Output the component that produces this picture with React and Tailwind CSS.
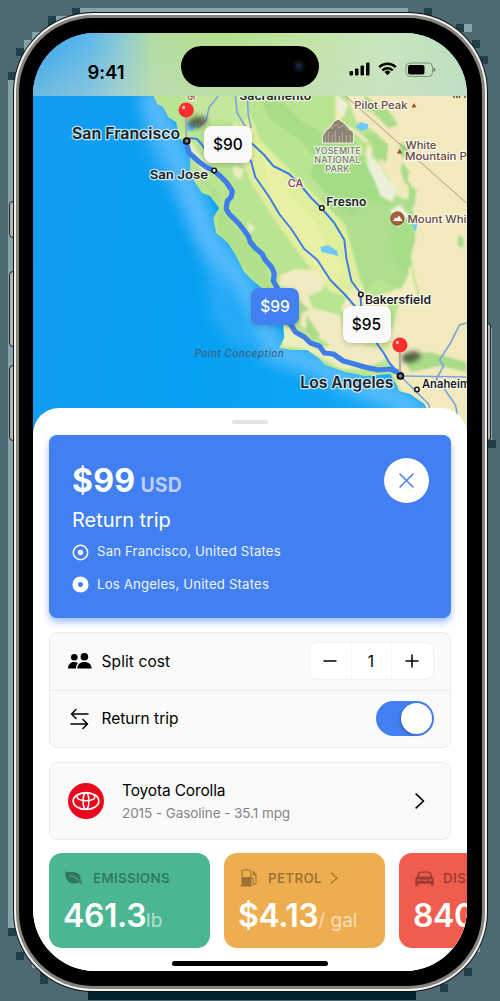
import React from "react";

const halo = { paintOrder: "stroke", stroke: "#ffffff", strokeWidth: 2.5, strokeLinejoin: "round" };

function Label({ x, y, w, size, weight = 600, fill = "#1d1f22", children, ...rest }) {
  return (
    <text x={x} y={y} textLength={w} lengthAdjust="spacingAndGlyphs" fontSize={size} fontWeight={weight} fill={fill} strokeOpacity="0.7" {...halo} {...rest}>
      {children}
    </text>
  );
}

function Town({ x, y, r = 2.2 }) {
  return <circle cx={x} cy={y} r={r} fill="#fff" stroke="#111" strokeWidth="1.5" />;
}

function Pin({ x, y }) {
  return (
    <g>
      <ellipse cx={x + 11} cy={y + 12} rx="10" ry="5.5" fill="#222" opacity="0.65" filter="url(#soft3)" transform={`rotate(-15 ${x + 11} ${y + 12})`} />
      <path d={`M${x} ${y + 6}V${y + 28}`} stroke="#a9a9a9" strokeWidth="2" />
      <circle cx={x} cy={y} r="7.6" fill="#fb2f2c" />
      <circle cx={x - 2.6} cy={y - 2.6} r="1.6" fill="#ffc4c0" />
      <circle cx={x + 0.5} cy={y + 31} r="2.9" fill="#777" stroke="#0a0a0a" strokeWidth="1.9" />
    </g>
  );
}

const COAST = "M151 90L157 104L163 107L168 117L176 122L179 138L184 142L186 150L190 157L190 170L194 181L202 193L210 196L219 208L213 218L216 233L228 243L236 256L244 272L252 280L264 290L272 305L283 323L284 338L279 348L292 350L307 350L318 358L325 365L345 372L365 376L390 374L399 391L410 394L424 404L434 425L434 450H480V90Z";

function MapView() {
  return (
    <svg className="block h-full w-full" viewBox="33 33 433 410" preserveAspectRatio="none" fontFamily="Inter, sans-serif">
      <defs>
        <linearGradient id="sea" x1="0" y1="0" x2="1" y2="0.1">
          <stop offset="0" stopColor="#149cf0" />
          <stop offset="0.45" stopColor="#06a0f2" />
          <stop offset="1" stopColor="#16a9f5" />
        </linearGradient>
        <linearGradient id="bar" x1="0" x2="1" y1="0" y2="0">
          <stop offset="0" stopColor="#2ea4f0" />
          <stop offset="0.13" stopColor="#5bb6ec" />
          <stop offset="0.21" stopColor="#8fcbd0" />
          <stop offset="0.28" stopColor="#b3dca0" />
          <stop offset="0.45" stopColor="#b4e08d" />
          <stop offset="0.66" stopColor="#c4e4a9" />
          <stop offset="0.8" stopColor="#cbe6bd" />
          <stop offset="1" stopColor="#bce0c0" />
        </linearGradient>
        <linearGradient id="fade" x1="0" x2="0" y1="0" y2="1">
          <stop offset="0" stopColor="#c8dcc8" stopOpacity="0" />
          <stop offset="1" stopColor="#c8dcc8" stopOpacity="0.4" />
        </linearGradient>
        <filter id="soft3" x="-50%" y="-80%" width="200%" height="260%"><feGaussianBlur stdDeviation="2.6" /></filter>
        <filter id="soft8" x="-30%" y="-30%" width="160%" height="160%"><feGaussianBlur stdDeviation="8" /></filter>
        <filter id="soft1"><feGaussianBlur stdDeviation="1.1" /></filter>
        <clipPath id="land"><path d={COAST} /></clipPath>
      </defs>
      <rect x="33" y="33" width="433" height="410" fill="url(#sea)" />
      <path d="M148 90L172 145L192 195L206 235L240 280L262 322L272 350L310 362L350 382L400 400L440 440" fill="none" stroke="#6cc4ff" strokeWidth="22" opacity="0.8" filter="url(#soft8)" />
      <path d="M150 100L158 150L195 210L215 265L222 315L250 345" fill="none" stroke="#66bdff" strokeWidth="20" opacity="0.4" filter="url(#soft8)" />
      <path d={COAST} fill="#b9e491" />
      <g clipPath="url(#land)">
        <g filter="url(#soft1)">
          <path d="M205 90L232 120L238 150L252 185L280 228L305 262L330 292L356 300L362 285L352 250L345 225L320 200L285 165L260 140L240 90Z" fill="#dfef9b" />
          <path d="M262 150L282 172L290 196L315 222L330 250L345 270L330 285L300 250L270 200Z" fill="#eaf0a4" />
          <path d="M335 90L344 115L338 122L352 128L368 140L365 155L385 175L388 200L405 215L408 245L412 275L418 300L388 300L388 320L360 325L340 310L350 290L365 285L372 298L395 290L400 270L412 262L400 240L402 215L395 190L378 175L370 160L372 148L350 130L335 120Z" fill="#f3eebf" />
          <path d="M345 90H470V450H434L424 404L400 391L388 360L352 340L368 325L392 330L398 305L420 300L408 250L413 232L404 213L395 190L378 160L388 145L372 130L356 122Z" fill="#f2eabd" />
          <path d="M410 200L416 225L412 245L408 275L400 290L376 278L366 296L360 280L352 250L345 225L322 200L335 175L360 160L375 175L392 195Z" fill="#afdf8e" />
          <path d="M322 140L345 130L360 150L365 165L385 190L392 205L372 200L350 215L335 205L310 175Z" fill="#a3db86" />
          <path d="M365 95L380 108L388 110L398 125L388 128L372 112L362 110Z M362 135L375 133L388 145L386 162L374 158L372 145Z M400 142L410 148L404 160L398 152ZM402 162L409 172L407 180L414 190L404 183L400 170ZM408 184L416 190L414 206L404 210L408 198ZM458 235L463 238V248L457 246Z" fill="#aadd8a" />
          <path d="M398 215L414 225L415 240L410 256L412 264L402 272L392 258L390 230Z" fill="#a6dd88" />
          <path d="M338 96L348 104L343 118L337 108ZM366 152L380 165L388 180L396 188L392 202L380 196L374 180L368 168ZM390 210L400 205L408 215L398 228Z" fill="#edf0d8" />
          <path d="M280 275L295 269L315 270L325 280L322 290L308 296L312 308L340 315L345 340L375 345L385 360L370 366L340 362L318 350L330 345L315 335L300 325L302 310L290 302L292 290L279 285Z" fill="#f2ebc2" />
          <path d="M282 325L300 335L315 348L325 353L345 360L365 370L340 369L318 356L300 348L282 347Z" fill="#eceebb" />
          <path d="M298 300L310 310L300 313ZM306 315L320 335L314 340L306 330ZM402 355L430 352L466 362V372L440 366L410 372Z" fill="#aadc88" />
          <path d="M348 325L372 330L392 342L386 352L365 346Z" fill="#d8e9a0" />
          <path d="M190 92L240 92L250 115L240 125L222 118L200 125Z" fill="#c5e79b" />
          <path d="M272 90L300 120L325 135L320 165L300 140L270 120L255 90Z" fill="#a9de86" />
          <path d="M233 165L244 170L240 180L233 174ZM247 222L255 228L249 234Z" fill="#edeec4" />
          <path d="M183 132L190 140L200 155L212 168L205 174L193 160L185 152Z" fill="#e6edc4" />
          <path d="M200 180L218 190L222 210L240 235L262 258L270 290L255 280L240 260L220 235L216 215L220 205Z" fill="#b0e08a" />
        </g>
        <path d="M355 127L360 122L368 124L367 129L361 131ZM320 247L328 245L337 251L338 256L330 254L321 252ZM411 222L417 224L415 232ZM186 122L196 126L192 132L187 130Z" fill="#6ecbfb" />
        <path d="M345 96L466 203" stroke="#9b8672" strokeWidth="0.8" fill="none" />
        <path d="M218 96L209 107L206 120L197 128M235 96L237 113L246 128M247 96L248 115L251 128M466 323L459 325L450 343L439 360L443 366L436 379L444 389L455 405L457 415M400 376L466 377M402 378L413 389L428 404L430 412" stroke="#7ba3da" strokeWidth="1.6" fill="none" />
      </g>
      <g fill="none" stroke="#3f7de8" strokeLinejoin="round" strokeLinecap="round">
        <path strokeWidth="2" d="M190 138L197 139L202 145L210 158M250 142L264 155L273 166L289 174L300 185L311 198L321 208L334 223L344 240L346 258L351 281L360 293L361 310M245 150L251 162L255 177L269 197L279 214L291 229L304 249L317 260L330 280L345 295L356 308M374 340L384 354L389 363L399 374" />
        <path strokeWidth="5.2" d="M187 146L189 153L199 162L206 167L214 171L220 176L226 182L232 191L231 197L227 201L226 209L229 214L239 224L248 236L250 242L255 248L262 254L265 260L272 268L274 274L273 281L277 288L283 318L291 325L295 332L304 337L310 343L319 346L324 353L333 354L343 361L354 364L364 367L378 370L390 369L399 373" />
      </g>
      <g>
        <path d="M322 143V136L326 130L330 127L334 121L338 119L344 123L349 129L353 132V143Z" fill="#8c8374" stroke="#f5f3df" strokeWidth="1" />
        <path d="M325 142V135M328 142V132M332 142V135M335 142V131M339 142V136M342 142V132M346 142V135M350 142V135M331 129L336 124L339 128L343 125L348 131" stroke="#c2baa2" strokeWidth="0.8" fill="none" />
      </g>
      <Label x={239} y={100} w={72} size={11.5}>Sacramento</Label>
      <Label x={187} y={100.5} w={9} size={9} fill="#a0543e">Gr</Label>
      <Label x={354} y={109} w={53} size={10.5} weight={500} fill="#6b4a3f">Pilot Peak</Label>
      <path d="M411 107.500L413.500 103L416 107.500ZM396.500 153.500L399.200 149L402 153.500Z" fill="#a94c34" />
      <Label x={405} y={149.500} w={31} size={10.500} weight={500} fill="#6b4a3f">White</Label>
      <Label x={404.500} y={160.500} w={62} size={10.500} weight={500} fill="#6b4a3f">Mountain P</Label>
      <Label x={314.500} y={154} w={46} size={8.3} weight={500} fill="#7e7d6c">YOSEMITE</Label>
      <Label x={314} y={163} w={46} size={8.3} weight={500} fill="#7e7d6c">NATIONAL</Label>
      <Label x={325} y={172} w={24} size={8.3} weight={500} fill="#7e7d6c">PARK</Label>
      <Label x={287.500} y={187} w={15.500} size={10.500} weight={500} fill="#8a3f52">CA</Label>
      <Label x={326} y={206.500} w={40} size={11.800}>Fresno</Label>
      <Label x={364.500} y={304.500} w={66} size={12}>Bakersfield</Label>
      <Label x={421.500} y={388} w={48} size={11.800}>Anaheim</Label>
      <circle cx="397" cy="218.500" r="6.700" fill="#a5623c" stroke="#7d452a" strokeWidth="0.800" />
      <path d="M392.500 221L395 217.500L396.500 218.500L398.500 215.500L402 221Z" fill="#fff" />
      <Label x={407} y={223} w={59} size={10.500} weight={500} fill="#6b4a3f">Mount Whi</Label>
      <text x="194.500" y="357.500" textLength="89" fontSize="10" fontStyle="italic" fontWeight="500" fill="#3d6384">Point Conception</text>
      <path d="M453.500 96v2M456 96l1 2M459 96v2M464.500 96v2" stroke="#333" strokeWidth="1.200" />
      <rect x="33" y="33" width="433" height="63" fill="url(#bar)" />
      <rect x="33" y="33" width="433" height="63" fill="url(#fade)" />
      <Pin x={186} y={110} />
      <Label x={72} y={139} w={108} size={15.500}>San Francisco</Label>
      <Label x={149.500} y={179} w={58.500} size={12.300}>San Jose</Label>
      <Town x={214} y={170.500} />
      <Town x={321.500} y={208} />
      <Town x={360.500} y={294.500} />
      <Town x={416.500} y={389.500} />
      <Pin x={399.500} y={345} />
      <Label x={300} y={388} w={93} size={15.500}>Los Angeles</Label>
    </svg>
  );
}

function PriceTag({ className, children }) {
  return (
    <div className={`absolute flex h-[37px] w-12 items-center justify-center rounded-lg text-[15.5px] font-medium shadow-[0_2px_5px_rgba(0,0,0,0.18)] ${className}`}>
      {children}
    </div>
  );
}

function StatusBar() {
  return (
    <div className="absolute inset-x-0 top-0 flex h-[63px] items-start">
      <div className="ml-[54.5px] mt-[25px] w-[60px] text-[18.5px] font-semibold leading-[28px] tracking-[-0.1px] text-black">9:41</div>
      <div className="ml-[33px] mt-[12.5px] flex h-[41px] w-[138px] items-center justify-end rounded-full bg-black pr-[14px]">
        <div className="flex h-3 w-3 items-center justify-center rounded-full bg-[#090e18]">
          <div className="h-1.5 w-1.5 rounded-full bg-[#10233c]" />
        </div>
      </div>
      <svg className="ml-auto mr-[31px] mt-[28px] h-4 w-[87px]" viewBox="0 0 87 16">
        <g fill="#050505">
          <rect x="0.500" y="10" width="3.500" height="4.500" rx="1" />
          <rect x="6" y="7.500" width="3.500" height="7" rx="1" />
          <rect x="11.500" y="4.500" width="3.500" height="10" rx="1" />
          <rect x="17" y="1.500" width="3.500" height="13" rx="1" />
          <rect x="59" y="4" width="16.500" height="9.500" rx="2" />
          <path d="M84.500 6.500q1.800 0.500 1.800 2.200t-1.800 2.200z" opacity="0.500" />
          <path d="M35.500 11l3 3.200l3-3.200a4.300 4.300 0 0 0-6 0z" />
        </g>
        <rect x="57" y="2" width="26.500" height="13.500" rx="4" fill="none" stroke="#222" strokeOpacity="0.400" />
        <path d="M30.200 6.100a12 12 0 0 1 16.600 0M33.300 9.300a7.600 7.600 0 0 1 10.400 0" fill="none" stroke="#050505" strokeWidth="2.300" />
      </svg>
    </div>
  );
}

function TripCard() {
  return (
    <section className="flex h-[183px] justify-between rounded-[8px] bg-[#427ff0] pl-[23px] pr-[22px] text-white shadow-[0_4px_7px_rgba(66,127,240,0.5)]">
      <div className="flex flex-col">
        <div className="mt-[26px] flex h-10 items-baseline">
          <span className="text-[32px] font-bold leading-10 tracking-[0.3px]">$99</span>
          <span className="ml-[5px] text-[19.5px] font-bold tracking-[0.1px] text-[#b9d0fb]">USD</span>
        </div>
        <h1 className="mt-[6px] h-[27px] text-[20px] leading-[27px] tracking-[-0.05px]">Return trip</h1>
        <div className="mt-[8px] flex h-5 items-center gap-2 text-[13.2px] tracking-[0.17px] text-[#eef4ff]">
          <svg className="h-[17px] w-[17px]" viewBox="0 0 17 17">
            <circle cx="8.500" cy="8.500" r="7.200" fill="none" stroke="#fff" strokeWidth="1.500" />
            <circle cx="8.500" cy="8.500" r="2.700" fill="#fff" />
          </svg>
          San Francisco, United States
        </div>
        <div className="mt-[12.5px] flex h-5 items-center gap-2 text-[13.2px] tracking-[0.17px] text-[#eef4ff]">
          <svg className="h-[17px] w-[17px]" viewBox="0 0 17 17">
            <circle cx="8.500" cy="8.500" r="5.300" fill="none" stroke="#fff" strokeWidth="5.600" />
          </svg>
          Los Angeles, United States
        </div>
      </div>
      <button className="mt-[22.5px] flex h-[45px] w-[45px] items-center justify-center rounded-full bg-white">
        <svg className="h-[15px] w-[15px]" viewBox="0 0 15 15"><path d="M1 1l13 13M14 1L1 14" stroke="#427ff0" strokeWidth="1.500" strokeLinecap="round" /></svg>
      </button>
    </section>
  );
}

function Options() {
  return (
    <section className="mt-[14px] flex h-[116px] flex-col rounded-lg border border-[#ececec] bg-[#fafafa] text-[15.5px] text-black">
      <div className="flex h-[58px] items-center border-b border-[#ebebeb] pl-[17.5px] pr-4">
        <svg className="h-4 w-6" viewBox="0 0 24 16">
          <circle cx="6.300" cy="4.300" r="3.300" />
          <path d="M0 15.500C0 11.500 2.500 9 6.300 9C7.700 9 8.900 9.300 9.900 9.900C8.700 11.200 8 13.200 8 15.500Z" />
          <circle cx="16.400" cy="3.800" r="3.800" />
          <path d="M9.300 15.500C9.300 11.500 12 8.900 16.400 8.900S23.600 11.500 23.600 15.500Z" />
        </svg>
        <span className="ml-[10px] tracking-[0.1px]">Split cost</span>
        <div className="ml-auto grid h-[38px] w-[125px] grid-cols-3 items-center justify-items-center rounded-lg border border-[#f0f0f0] bg-white">
          <svg className="h-[14px] w-[14px]" viewBox="0 0 14 14"><path d="M0.500 7h13" stroke="#000" strokeWidth="1.500" /></svg>
          <span className="flex h-full w-full items-center justify-center border-x border-[#f7f7f7]">1</span>
          <svg className="h-[14px] w-[14px]" viewBox="0 0 14 14"><path d="M0.500 7h13M7 0.500v13" stroke="#000" strokeWidth="1.500" /></svg>
        </div>
      </div>
      <div className="flex h-[57px] items-center pl-5 pr-[15.500px]">
        <svg className="h-[22px] w-[19px]" viewBox="0 0 19 22" fill="none" stroke="#000" strokeWidth="1.500" strokeLinecap="round" strokeLinejoin="round">
          <path d="M18 6H1.500M6 1.500L1.500 6L6 10.500M1 16H17.500M13 11.500L17.500 16L13 20.500" />
        </svg>
        <span className="ml-[12.500px] tracking-[0px]">Return trip</span>
        <div className="ml-auto flex h-[35px] w-[58px] items-center justify-end rounded-full bg-[#427ff0] pr-[2px]">
          <div className="h-[31px] w-[31px] rounded-full bg-white shadow-[-1px_1px_3px_rgba(0,0,0,0.25)]" />
        </div>
      </div>
    </section>
  );
}

function Vehicle() {
  return (
    <section className="mt-[14px] flex h-[78px] items-center rounded-lg border border-[#ececec] bg-[#fafafa] pl-[18px] pr-[25px]">
      <svg className="h-9 w-9" viewBox="0 0 36 36">
        <circle cx="18" cy="18" r="18" fill="#ea0a1e" />
        <g fill="none" stroke="#fff">
          <ellipse cx="18" cy="18" rx="12.800" ry="8.500" strokeWidth="1.700" />
          <ellipse cx="18" cy="13.900" rx="9" ry="3.900" strokeWidth="1.400" />
          <ellipse cx="18" cy="18" rx="2.900" ry="8.200" strokeWidth="1.400" />
        </g>
      </svg>
      <div className="ml-[18px] flex flex-col">
        <span className="h-[23px] text-[15.500px] leading-[23px] tracking-[-0.15px] text-black">Toyota Corolla</span>
        <span className="h-[22px] text-[13.500px] leading-[22px] tracking-[-0.07px] text-[#858585]">2015 - Gasoline - 35.1 mpg</span>
      </div>
      <svg className="ml-auto h-4 w-[10px]" viewBox="0 0 10 16"><path d="M1.200 1.200L8.500 8L1.200 14.800" fill="none" stroke="#000" strokeWidth="1.700" strokeLinecap="round" strokeLinejoin="round" /></svg>
    </section>
  );
}

function LeafIcon() {
  return (
    <svg className="h-[14px] w-[18px]" viewBox="0 0 18 14">
      <path d="M0.500 0.300C3 1.600 6.500 0.800 10 1.300C14.300 2 16 5 15.600 9.500C16.500 10.800 17.300 11.800 17.300 12.800C17.300 13.700 16.300 13.800 15.900 13C15.500 12.100 15.200 11.600 14.700 11C10 13.500 4.500 13 2 9C0.300 6.300 0 3 0.500 0.300Z" fill="currentColor" />
      <path d="M4.500 4.700C8 5 11.500 6.500 13.800 9.300" stroke="#4cb692" strokeWidth="1" fill="none" strokeLinecap="round" />
    </svg>
  );
}

function PumpIcon() {
  return (
    <svg className="h-[18px] w-[18px]" viewBox="0 0 18 18" fill="none" stroke="currentColor" strokeWidth="1.100">
      <path d="M2 8V2.500Q2 1 3.500 1H9.500Q11 1 11 2.500V8M11.500 9H12Q13.200 9 13.200 10.500V14Q13.200 15.500 14.600 15.500T16 14V6L13 2M13.500 3V6H16" />
      <path d="M1.500 8H11.500V16.500H12.500V17.500H0.500V16.500H1.500Z" fill="currentColor" stroke="none" />
    </svg>
  );
}

function CarIcon() {
  return (
    <svg className="h-[15px] w-[19px]" viewBox="0 0 19 15">
      <path fill="currentColor" fillRule="evenodd" d="M5 0.500H14Q15.200 0.500 15.700 1.700L17.300 5.700Q18.700 6.500 18.700 8.500V14Q18.700 14.700 18 14.700H16.500Q15.800 14.700 15.800 14V12.800H3.200V14Q3.200 14.700 2.500 14.700H1Q0.300 14.700 0.300 14V8.500Q0.300 6.500 1.700 5.700L3.300 1.700Q3.800 0.500 5 0.500ZM5 1.800L3.500 5.400H15.500L14 1.800ZM2.600 8.300V9.900H5V8.300ZM14 8.300V9.900H16.400V8.300ZM6.500 8.700V9.700H12.500V8.700Z" />
    </svg>
  );
}

function Stat({ className, icon, title, value, unit, arrow }) {
  return (
    <div className={`h-[95px] w-[161px] shrink-0 rounded-[13px] pl-[14px] ${className}`}>
      <div className="mt-[15px] flex h-[20px] items-center text-[13.500px] font-semibold tracking-[0.2px] text-black/35">
        <span className="flex w-[30px] pl-[2px]">{icon}</span>
        {title}
        {arrow && <svg className="ml-[8px] h-3 w-2" viewBox="0 0 8 12"><path d="M1 0.500L7 6L1 11.500" fill="none" stroke="currentColor" strokeWidth="1.300" /></svg>}
      </div>
      <div className="mt-[8px] flex h-10 items-baseline text-white">
        <span className="text-[32px] font-semibold leading-10 tracking-[-0.4px]">{value}</span>
        <span className="whitespace-pre text-[19px] text-white/60">{unit}</span>
      </div>
    </div>
  );
}

function Stats() {
  return (
    <section className="mt-[13px] flex gap-[14px] overflow-hidden">
      <Stat className="bg-[#4cb692]" icon={<LeafIcon />} title="EMISSIONS" value="461.3" unit="lb" />
      <Stat className="bg-[#eeae50]" icon={<PumpIcon />} title="PETROL" value="$4.13" unit="/ gal" arrow />
      <Stat className="bg-[#f05c4d]" icon={<CarIcon />} title="DISTANCE" value="840" unit="mi" />
    </section>
  );
}

function Backdrop() {
  return (
    <svg className="absolute inset-0 h-full w-full" viewBox="0 0 500 1001" shapeRendering="crispEdges">
      <path fill="#86a3a9" d="M80 8H408V16H80ZM56 16H80V24H56ZM32 32H48V40H32ZM24 40H32V56H24ZM8 80H16V928H8ZM32 952H40V968H32ZM464 24H472V32H464ZM472 936H480V952H472ZM488 328H492V440H488Z" />
      <path fill="#213f4a" d="M72 8H80V16H72ZM48 16H56V32H48ZM16 48H24V56H16ZM8 72H16V80H8ZM424 8H432V16H424ZM456 24H464V32H456ZM472 40H480V48H472ZM480 56H488V64H480ZM8 928H16V936H8ZM16 952H24V960H16ZM40 968H48V984H40ZM464 968H472V976H464ZM440 984H448V992H440ZM488 440H496V448H488Z" />
      <path fill="#04222c" d="M88 984H416V1000H88Z" />
    </svg>
  );
}

export default function App() {
  return (
    <main className="relative h-[1001px] w-[500px] overflow-hidden bg-[#4d6971] font-['Inter',sans-serif]">
      <Backdrop />
      <div className="absolute left-[9px] top-[201px] h-[37px] w-[5px] rounded-l-sm border border-[#222] bg-[#b5b5b5]" />
      <div className="absolute left-[9px] top-[271px] h-[76px] w-[5px] rounded-l-sm border border-[#222] bg-[#b5b5b5]" />
      <div className="absolute left-[9px] top-[365px] h-[76px] w-[5px] rounded-l-sm border border-[#222] bg-[#b5b5b5]" />
      <div className="absolute left-[487px] top-[323px] h-[118px] w-[4px] rounded-r-sm border border-[#222] bg-[#b5b5b5]" />
      <div className="relative ml-[13px] pt-3">
        <div className="h-[980px] w-[475px] rounded-[80px] bg-[#111] p-px">
          <div className="h-full rounded-[79px] bg-[#f4f4f2] p-[2px]">
            <div className="h-full rounded-[77px] bg-[#858580] p-[3px]">
              <div className="h-full rounded-[74px] bg-black pb-[15px] pl-[14px] pr-[15.5px] pt-[15px]">
                <div className="relative flex h-full flex-col overflow-hidden rounded-[62px] bg-white">
                  <div className="relative -mb-[35px] h-[410px] shrink-0">
                    <MapView />
                    <StatusBar />
                    <PriceTag className="left-[171px] top-[93px] bg-[#fafafa] text-black">$90</PriceTag>
                    <PriceTag className="left-[218px] top-[255px] bg-[#427ff0] text-white">$99</PriceTag>
                    <PriceTag className="left-[309.5px] top-[273px] bg-[#fafafa] text-black">$95</PriceTag>
                  </div>
                  <div className="relative flex grow flex-col rounded-t-[26px] bg-white pl-4">
                    <div className="ml-[183px] mt-[12px] h-1 w-9 rounded-full bg-[#e4e4e4]" />
                    <div className="mr-4 mt-[11px] flex flex-col">
                      <TripCard />
                      <Options />
                      <Vehicle />
                    </div>
                    <Stats />
                    <div className="ml-[123px] mt-[13px] h-[5px] w-[156px] rounded-full bg-black" />
                  </div>
                </div>
              </div>
            </div>
          </div>
        </div>
      </div>
    </main>
  );
}
